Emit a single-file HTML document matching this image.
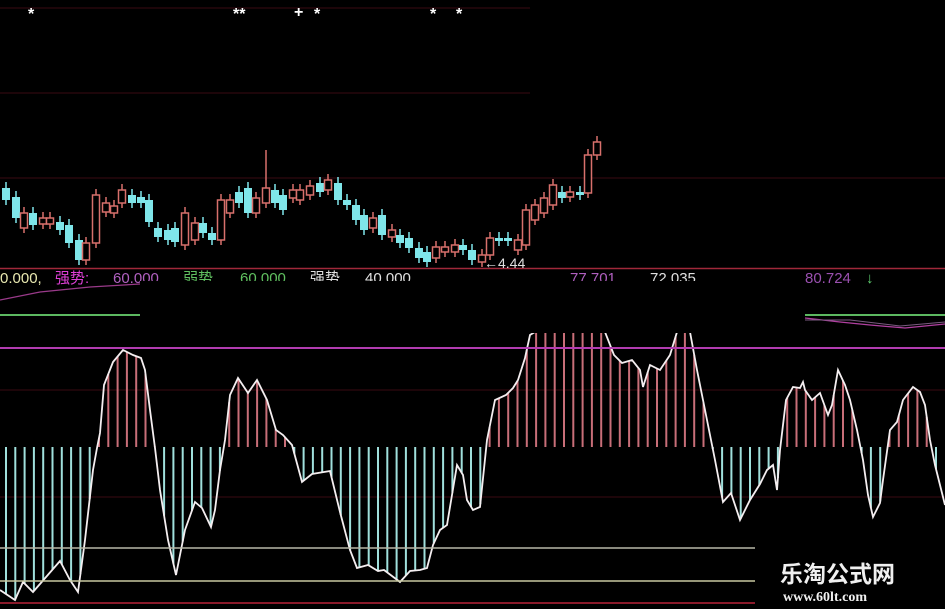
<!DOCTYPE html>
<html><head><meta charset="utf-8"><style>
html,body{margin:0;padding:0;background:#000;width:945px;height:609px;overflow:hidden}
svg{display:block}
</style></head><body>
<svg id="s" width="945" height="609" xmlns="http://www.w3.org/2000/svg" font-family="Liberation Sans, Noto Sans CJK SC, sans-serif">
<rect width="945" height="609" fill="#000"/>
<g stroke-width="1">
<line x1="0" y1="8" x2="530" y2="8" stroke="#3a0a12"/>
<line x1="0" y1="93" x2="530" y2="93" stroke="#3a0a12"/>
<line x1="0" y1="178" x2="945" y2="178" stroke="#3a0a12"/>
<line x1="0" y1="268.5" x2="945" y2="268.5" stroke="#a0283a" stroke-width="1.5"/>
<line x1="0" y1="390" x2="945" y2="390" stroke="#3a0a12"/>
<line x1="0" y1="497" x2="945" y2="497" stroke="#3a0a12"/>
<line x1="0" y1="603" x2="945" y2="603" stroke="#8a1a2a" stroke-width="2"/>
</g>
<g id="cand"></g>
<g id="bars"></g>
<polyline id="osc" fill="none" stroke="#f4eef0" stroke-width="1.8"/>
<line x1="0" y1="348" x2="945" y2="348" stroke="#b23cb0" stroke-width="2"/>
<line x1="0" y1="548" x2="755" y2="548" stroke="#b8b8a8" stroke-width="1.5"/>
<line x1="0" y1="581" x2="755" y2="581" stroke="#c8c8a0" stroke-width="1.5"/>
<g font-size="15">
<text x="0" y="283" fill="#e8e8b0">0.000,</text>
<text x="55" y="283" fill="#e040d8">强势:</text>
<text x="113" y="283" fill="#b060c0">60.000</text>
<text x="183" y="283" fill="#60c060">弱势</text>
<text x="240" y="283" fill="#60c060">60.000</text>
<text x="310" y="283" fill="#e0e0e0">强势</text>
<text x="365" y="283" fill="#e0e0e0">40.000</text>
<text x="570" y="283" fill="#b060c0">77.701</text>
<text x="650" y="283" fill="#e0e0e0">72.035</text>
<text x="805" y="283" fill="#9a50b0">80.724</text>
<text x="866" y="283" fill="#60d070">↓</text>
</g>
<text x="484" y="268" fill="#e0e0e0" font-size="14">←4.44</text>
<rect x="140" y="281" width="665" height="52" fill="#000"/>
<rect x="0" y="284" width="945" height="0" fill="#000"/>
<line x1="0" y1="315" x2="140" y2="315" stroke="#5cb860" stroke-width="2"/>
<line x1="805" y1="315" x2="945" y2="315" stroke="#5cb860" stroke-width="2"/>
<polyline points="0,300 40,292 90,287 140,284" fill="none" stroke="#9a3a8a" stroke-width="1.2"/>
<polyline points="805,318 840,322 870,325 905,328 945,324" fill="none" stroke="#b040a0" stroke-width="1.2"/>
<polyline points="805,320 850,320 900,326 945,322" fill="none" stroke="#7a5a80" stroke-width="1"/>
<g fill="#fff" font-size="16" font-weight="bold">
<text x="28" y="19">*</text><text x="233" y="19">**</text><text x="294" y="17">+</text><text x="314" y="19">*</text><text x="430" y="19">*</text><text x="456" y="19">*</text>
</g>
<rect x="755" y="548" width="190" height="61" fill="#000"/>
<text x="780" y="582" fill="#f0f0f0" font-size="23" font-weight="bold">乐淘公式网</text>
<text x="783" y="601" fill="#f0f0f0" font-size="14" font-weight="bold" font-family="Liberation Serif, serif">www.60lt.com</text>
</svg>
<script>
var NS="http://www.w3.org/2000/svg";
function el(p,t,a){var e=document.createElementNS(NS,t);for(var k in a)e.setAttribute(k,a[k]);p.appendChild(e);return e;}
var pts=[[0,590],[15,600],[23,582],[33,592],[60,561],[70,580],[78,592],[85,540],[93,470],[97,448],[100,433],[104,385],[113,362],[123,350],[133,355],[141,358],[145,370],[150,410],[155,448],[160,490],[168,540],[176,575],[185,530],[195,502],[202,508],[211,527],[215,510],[220,470],[225,440],[230,395],[238,378],[248,393],[257,380],[267,400],[276,430],[283,435],[292,445],[302,482],[312,474],[330,471],[340,512],[350,550],[357,568],[368,565],[378,571],[384,570],[400,582],[410,571],[420,570],[427,568],[433,545],[440,530],[447,525],[457,465],[463,475],[467,500],[473,510],[480,507],[487,440],[495,400],[506,395],[513,388],[518,380],[525,358],[530,335],[535,332],[605,332],[614,355],[622,363],[632,360],[640,370],[643,387],[650,365],[660,370],[670,355],[677,332],[690,332],[697,370],[707,420],[715,460],[723,502],[731,493],[740,520],[750,500],[760,484],[767,470],[773,465],[777,490],[780,450],[786,400],[793,387],[800,388],[803,382],[805,390],[812,400],[820,393],[828,415],[832,405],[838,370],[845,385],[850,400],[857,430],[863,460],[868,495],[873,517],[880,503],[883,480],[890,430],[897,422],[903,400],[913,387],[920,392],[925,405],[930,440],[935,465],[945,505]];
document.getElementById('osc').setAttribute('points',pts.map(function(p){return p.join(',')}).join(' '));
function yat(x){for(var i=1;i<pts.length;i++){if(x<=pts[i][0]){var a=pts[i-1],b=pts[i];return a[1]+(b[1]-a[1])*(x-a[0])/(b[0]-a[0]);}}return pts[pts.length-1][1];}
var bars=document.getElementById('bars');
for(var x=6;x<945;x+=9.3){var y=yat(x);var c=y<447?"#c86e78":"#a0e0dc";el(bars,'line',{x1:x,y1:447,x2:x,y2:y,stroke:c,'stroke-width':2});}
var cd=[[6,188,200,0],[16,197,218,0],[24,213,228,1],[33,213,225,0],[43,218,224,1],[50,218,224,1],[60,222,230,0],[69,225,243,0],[79,240,260,0],[86,243,260,1],[96,195,243,1],[106,203,212,1],[114,206,213,1],[122,190,203,1],[132,195,203,0],[141,197,203,0],[149,200,222,0],[158,228,237,0],[168,230,240,0],[175,228,242,0],[185,213,245,1],[195,223,240,1],[203,223,233,0],[212,233,240,0],[221,200,240,1],[230,200,213,1],[239,192,203,0],[248,188,213,0],[256,198,213,1],[266,188,203,1,150],[275,190,203,0],[283,195,210,0],[293,190,198,1],[300,190,200,1],[310,186,195,1],[320,183,192,0],[328,180,190,1],[338,183,200,0],[347,200,205,0],[356,205,220,0],[364,215,230,0],[373,218,228,1],[382,215,235,0],[392,230,237,1],[400,235,243,0],[409,238,248,0],[419,248,258,0],[427,252,262,0],[436,247,258,1],[445,247,252,1],[455,245,252,1],[463,245,250,0],[472,250,260,0],[482,255,262,1],[490,238,255,1],[499,238,241,0],[508,238,241,0],[518,240,250,1],[526,210,245,1],[535,205,220,1],[544,198,213,1],[553,185,205,1],[562,192,198,0],[570,192,197,1],[580,192,195,0],[588,155,193,1],[597,142,155,1]];
var g=document.getElementById('cand');
cd.forEach(function(c){var col=c[3]?"#d8706c":"#7fe6ea";var top=c[4]||c[1]-6;el(g,'line',{x1:c[0],y1:top,x2:c[0],y2:c[2]+5,stroke:col,'stroke-width':1.5});
if(c[3])el(g,'rect',{x:c[0]-3.5,y:c[1],width:7,height:Math.max(c[2]-c[1],3),fill:"#000",stroke:col,'stroke-width':1.5});
else el(g,'rect',{x:c[0]-4,y:c[1],width:8,height:Math.max(c[2]-c[1],3),fill:col});});
</script>
</body></html>
